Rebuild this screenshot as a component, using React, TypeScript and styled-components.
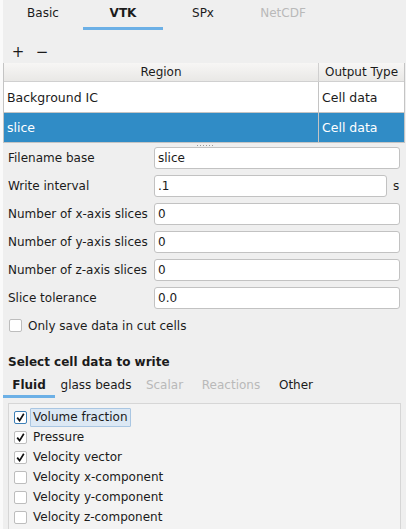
import styled, { createGlobalStyle } from "styled-components"

const GlobalStyle = createGlobalStyle`
    html, body {
        margin: 0;
        padding: 0;
        background: #efefef;
    }
    body {
        font-family: "DejaVu Sans", "Liberation Sans", sans-serif;
        font-size: 12px;
        color: #1b1b1b;
    }
`

const topTabs = [
    { label: "Basic", active: false, disabled: false },
    { label: "VTK", active: true, disabled: false },
    { label: "SPx", active: false, disabled: false },
    { label: "NetCDF", active: false, disabled: true },
]

const subTabs = [
    { label: "Fluid", active: true, disabled: false, width: 52 },
    { label: "glass beads", active: false, disabled: false, width: 82 },
    { label: "Scalar", active: false, disabled: true, width: 55 },
    { label: "Reactions", active: false, disabled: true, width: 78 },
    { label: "Other", active: false, disabled: false, width: 52 },
]

const fields = [
    { label: "Filename base", value: "slice" },
    { label: "Write interval", value: ".1", unit: "s" },
    { label: "Number of x-axis slices", value: "0" },
    { label: "Number of y-axis slices", value: "0" },
    { label: "Number of z-axis slices", value: "0" },
    { label: "Slice tolerance", value: "0.0" },
]

const cellData = [
    { label: "Volume fraction", checked: true, focused: true },
    { label: "Pressure", checked: true, focused: false },
    { label: "Velocity vector", checked: true, focused: false },
    { label: "Velocity x-component", checked: false, focused: false },
    { label: "Velocity y-component", checked: false, focused: false },
    { label: "Velocity z-component", checked: false, focused: false },
]

function Check({ checked, focused }: { checked: boolean; focused?: boolean }) {
    return (
        <Box $focused={focused}>
            {checked && (
                <svg width="9" height="9" viewBox="0 0 9 9">
                    <path d="M1.2 4.6 L3.6 7.6 L7.8 0.8" fill="none" stroke="#111" strokeWidth="1.7" />
                </svg>
            )}
        </Box>
    )
}

function App() {
    return (
        <>
            <GlobalStyle />
            <Page>
                <TabBar>
                    {topTabs.map((t) => (
                        <TopTab key={t.label} $active={t.active} $disabled={t.disabled}>
                            {t.label}
                        </TopTab>
                    ))}
                </TabBar>

                <Toolbar>
                    <ToolButton>+</ToolButton>
                    <ToolButton>−</ToolButton>
                </Toolbar>

                <Table>
                    <HeaderRow>
                        <HeadCell>Region</HeadCell>
                        <HeadCell>Output Type</HeadCell>
                    </HeaderRow>
                    <Row>
                        <Cell>Background IC</Cell>
                        <Cell>Cell data</Cell>
                    </Row>
                    <Row $selected>
                        <Cell>slice</Cell>
                        <Cell>Cell data</Cell>
                    </Row>
                </Table>

                <Splitter>
                    {Array.from({ length: 6 }).map((_, i) => (
                        <Dot key={i} />
                    ))}
                </Splitter>

                <Form>
                    {fields.map((f) => (
                        <FieldRow key={f.label}>
                            <Label>{f.label}</Label>
                            <Input $narrow={!!f.unit}>{f.value}</Input>
                            {f.unit && <Unit>{f.unit}</Unit>}
                        </FieldRow>
                    ))}
                </Form>

                <CheckRow>
                    <Check checked={false} />
                    <span>Only save data in cut cells</span>
                </CheckRow>

                <SectionTitle>Select cell data to write</SectionTitle>

                <SubTabBar>
                    {subTabs.map((t) => (
                        <SubTab key={t.label} $active={t.active} $disabled={t.disabled} $width={t.width}>
                            {t.label}
                        </SubTab>
                    ))}
                </SubTabBar>

                <ListBox>
                    {cellData.map((c) => (
                        <ListItem key={c.label}>
                            <Check checked={c.checked} focused={c.focused} />
                            <ItemText $focused={c.focused}>{c.label}</ItemText>
                        </ListItem>
                    ))}
                </ListBox>
            </Page>
        </>
    )
}

export default App

const Page = styled.div`
    width: 403px;
    height: 529px;
    border-left: 3px solid #fafafa;
    overflow: hidden;
    display: flex;
    flex-direction: column;
`

const TabBar = styled.div`
    display: flex;
    height: 30px;
`

const TopTab = styled.div<{ $active?: boolean; $disabled?: boolean }>`
    width: 80px;
    box-sizing: border-box;
    display: flex;
    align-items: center;
    justify-content: center;
    padding-bottom: 1px;
    font-weight: ${(p) => (p.$active ? "bold" : "normal")};
    color: ${(p) => (p.$disabled ? "#b9b9b9" : "#1b1b1b")};
    border-bottom: 3px solid ${(p) => (p.$active ? "#6cb0e6" : "transparent")};
`

const Toolbar = styled.div`
    display: flex;
    align-items: center;
    height: 33px;
    padding-left: 7px;
    gap: 8px;
`

const ToolButton = styled.span`
    width: 16px;
    text-align: center;
    font-size: 15px;
    line-height: 16px;
    margin-top: 10px;
`

const Table = styled.div`
    width: 402px;
    border: 1px solid #c4c4c4;
    border-top: none;
    box-sizing: border-box;
    background: #fff;
`

const HeaderRow = styled.div`
    display: grid;
    grid-template-columns: 314px 1fr;
    height: 18px;
    background: linear-gradient(#f7f6f5, #e9e8e6);
    border-bottom: 1px solid #d0d0d0;
`

const HeadCell = styled.div`
    display: flex;
    align-items: center;
    justify-content: center;
    & + & {
        border-left: 1px solid #cfcfcf;
    }
`

const Row = styled.div<{ $selected?: boolean }>`
    display: grid;
    grid-template-columns: 314px 1fr;
    box-sizing: border-box;
    height: 30px;
    background: ${(p) => (p.$selected ? "#308cc6" : "#fff")};
    color: ${(p) => (p.$selected ? "#fff" : "#1b1b1b")};
    & + & {
        border-top: 1px solid #c4c4c4;
    }
`

const Cell = styled.div`
    display: flex;
    align-items: center;
    padding-left: 3px;
    font-size: 12.5px;
    & + & {
        border-left: 1px solid #c4c4c4;
    }
`

const Splitter = styled.div`
    height: 4px;
    display: flex;
    justify-content: center;
    align-items: center;
    gap: 2px;
`

const Dot = styled.span`
    width: 1px;
    height: 1px;
    background: #9a9a9a;
`

const Form = styled.div`
    display: flex;
    flex-direction: column;
    gap: 6px;
    padding: 0 5px 0 5px;
`

const FieldRow = styled.div`
    display: flex;
    align-items: center;
    height: 22px;
`

const Label = styled.div`
    width: 146px;
    flex-shrink: 0;
`

const Input = styled.div<{ $narrow?: boolean }>`
    box-sizing: border-box;
    width: ${(p) => (p.$narrow ? "233px" : "246px")};
    height: 22px;
    background: #fff;
    border: 1px solid #c2c2c2;
    border-radius: 3px;
    display: flex;
    align-items: center;
    padding-left: 3px;
`

const Unit = styled.span`
    margin-left: 6px;
`

const CheckRow = styled.div`
    display: flex;
    align-items: center;
    gap: 6px;
    margin: 10px 0 0 6px;
    height: 13px;
`

const Box = styled.span<{ $focused?: boolean }>`
    box-sizing: border-box;
    width: 13px;
    height: 13px;
    flex-shrink: 0;
    background: #fff;
    border: 1px solid ${(p) => (p.$focused ? "#3d7fb6" : "#bdbdbd")};
    border-radius: 2px;
    display: flex;
    align-items: center;
    justify-content: center;
`

const SectionTitle = styled.div`
    font-weight: bold;
    margin: 23px 0 0 5px;
    height: 16px;
`

const SubTabBar = styled.div`
    display: flex;
    height: 23px;
    margin-top: 4px;
`

const SubTab = styled.div<{ $active?: boolean; $disabled?: boolean; $width: number }>`
    width: ${(p) => p.$width}px;
    box-sizing: border-box;
    display: flex;
    align-items: center;
    justify-content: center;
    font-weight: ${(p) => (p.$active ? "bold" : "normal")};
    color: ${(p) => (p.$disabled ? "#b9b9b9" : "#1b1b1b")};
    border-bottom: 3px solid ${(p) => (p.$active ? "#6cb0e6" : "transparent")};
`

const ListBox = styled.div`
    margin: 5px 0 0 5px;
    width: 393px;
    flex: 1;
    box-sizing: border-box;
    border: 1px solid #d6d6d6;
    border-bottom: none;
    background: #f3f3f3;
    padding: 3px 0 0 5px;
    display: flex;
    flex-direction: column;
`

const ListItem = styled.div`
    display: flex;
    align-items: center;
    height: 20px;
    gap: 3px;
`

const ItemText = styled.span<{ $focused?: boolean }>`
    padding: 0 2px 0 2px;
    height: 17px;
    line-height: 17px;
    border: 1px solid ${(p) => (p.$focused ? "#a9c6e2" : "transparent")};
    background: ${(p) => (p.$focused ? "#dce8f4" : "transparent")};
    border-radius: 1px;
`
